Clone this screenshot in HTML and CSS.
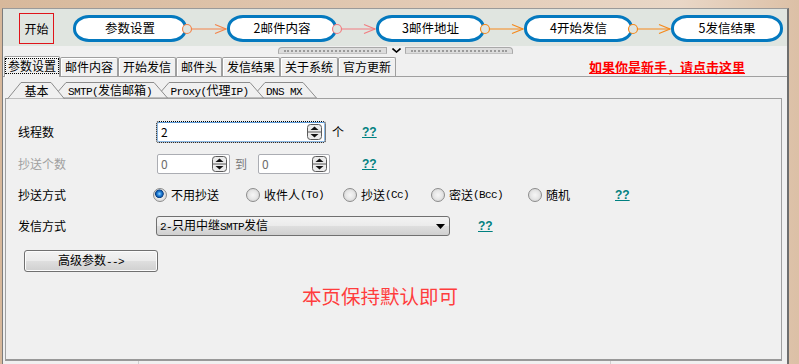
FILE: index.html
```html
<!DOCTYPE html>
<html lang="zh-CN">
<head>
<meta charset="utf-8">
<title>群发设置</title>
<link rel="stylesheet" href="styles.css">
</head>
<body>
<div class="frame">
  <div class="header">
    <div class="start">开始</div>
    <div class="flow">
      <div class="node">参数设置</div>
      <svg class="conn orange" width="40" height="27" viewBox="0 0 40 27"><line x1="4.5" y1="14" x2="39" y2="14"/><polyline points="28,9.5 39,14 28,18.5"/><circle cx="0" cy="14" r="4.5"/></svg>
      <div class="node">2邮件内容</div>
      <svg class="conn pink" width="39" height="27" viewBox="0 0 39 27"><line x1="4.5" y1="14" x2="38" y2="14"/><polyline points="27,9.5 38,14 27,18.5"/><circle cx="0" cy="14" r="4.5"/></svg>
      <div class="node">3邮件地址</div>
      <svg class="conn amber" width="39" height="27" viewBox="0 0 39 27"><line x1="4.5" y1="14" x2="38" y2="14"/><polyline points="27,9.5 38,14 27,18.5"/><circle cx="0" cy="14" r="4.5"/></svg>
      <div class="node">4开始发信</div>
      <svg class="conn amber" width="38" height="27" viewBox="0 0 38 27"><line x1="4.5" y1="14" x2="37" y2="14"/><polyline points="26,9.5 37,14 26,18.5"/><circle cx="0" cy="14" r="4.5"/></svg>
      <div class="node">5发信结果</div>
    </div>
  </div>

  <div class="splitter">
    <div class="grip grip-left"></div>
    <div class="chev"><svg width="9" height="5" viewBox="0 0 9 5"><polyline points="0.5,0.5 4.5,4 8.5,0.5"/></svg></div>
    <div class="grip grip-right"></div>
  </div>

  <div class="tabrow">
    <div class="tabs">
      <div class="tab active"><span class="focus">参数设置</span></div>
      <div class="tab">邮件内容</div>
      <div class="tab">开始发信</div>
      <div class="tab">邮件头</div>
      <div class="tab">发信结果</div>
      <div class="tab">关于系统</div>
      <div class="tab">官方更新</div>
    </div>
    <a class="newbie">如果你是新手，请点击这里</a>
  </div>

  <div class="page">
    <div class="subtabs">
      <div class="stab s1 sel">
        <svg width="58" height="17" viewBox="0 0 58 17"><polygon points="0.5,17 14,0.5 44,0.5 57.5,17"/></svg>
        <span class="stext">基本</span>
      </div>
      <div class="stab s2">
        <svg width="116" height="16" viewBox="0 0 116 16"><polygon points="0.5,16 14,0.5 102,0.5 115.5,16"/></svg>
        <span class="stext"><span class="a">SMTP(</span>发信邮箱<span class="a">)</span></span>
      </div>
      <div class="stab s3">
        <svg width="109" height="16" viewBox="0 0 109 16"><polygon points="0.5,16 14,0.5 95,0.5 108.5,16"/></svg>
        <span class="stext"><span class="a">Proxy(</span>代理<span class="a">IP)</span></span>
      </div>
      <div class="stab s4">
        <svg width="66" height="16" viewBox="0 0 66 16"><polygon points="0.5,16 14,0.5 52,0.5 65.5,16"/></svg>
        <span class="stext"><span class="a">DNS MX</span></span>
      </div>
    </div>

    <div class="panel">
      <div class="row r1">
        <span class="label">线程数</span>
        <div class="spin focus w1">
          <span class="value">2</span>
          <svg class="spinbtn" width="15" height="16" viewBox="0 0 15 16"><rect x="0.5" y="0.5" width="14" height="15" rx="3"/><line x1="1" y1="8" x2="14" y2="8"/><polygon points="3.5,6 7.5,2.5 11.5,6"/><polygon points="3.5,10 7.5,13.5 11.5,10"/></svg>
        </div>
        <span class="unit">个</span>
        <a class="help h1">??</a>
      </div>

      <div class="row r2">
        <span class="label disabled">抄送个数</span>
        <div class="spin w2">
          <span class="value dim">0</span>
          <svg class="spinbtn" width="15" height="16" viewBox="0 0 15 16"><rect x="0.5" y="0.5" width="14" height="15" rx="3"/><line x1="1" y1="8" x2="14" y2="8"/><polygon points="3.5,6 7.5,2.5 11.5,6"/><polygon points="3.5,10 7.5,13.5 11.5,10"/></svg>
        </div>
        <span class="to">到</span>
        <div class="spin w3">
          <span class="value dim">0</span>
          <svg class="spinbtn" width="15" height="16" viewBox="0 0 15 16"><rect x="0.5" y="0.5" width="14" height="15" rx="3"/><line x1="1" y1="8" x2="14" y2="8"/><polygon points="3.5,6 7.5,2.5 11.5,6"/><polygon points="3.5,10 7.5,13.5 11.5,10"/></svg>
        </div>
        <a class="help h2">??</a>
      </div>

      <div class="row r3">
        <span class="label">抄送方式</span>
        <div class="radios">
          <label class="ropt o1"><span class="radio on"></span>不用抄送</label>
          <label class="ropt o2"><span class="radio"></span>收件人<span class="a">(To)</span></label>
          <label class="ropt o3"><span class="radio"></span>抄送<span class="a">(Cc)</span></label>
          <label class="ropt o4"><span class="radio"></span>密送<span class="a">(Bcc)</span></label>
          <label class="ropt o5"><span class="radio"></span>随机</label>
          <a class="help">??</a>
        </div>
      </div>

      <div class="row r4">
        <span class="label">发信方式</span>
        <div class="combo">
          <span class="ctext"><span class="a">2-</span>只用中继<span class="a">SMTP</span>发信</span>
          <svg class="carrow" width="9" height="5" viewBox="0 0 9 5"><polygon points="0,0 9,0 4.5,5"/></svg>
        </div>
        <a class="help h4">??</a>
      </div>

      <div class="row r5">
        <button class="btn" type="button">高级参数<span class="a">--&gt;</span></button>
      </div>

      <div class="note">本页保持默认即可</div>
    </div>
  </div>

  <div class="status">
    <span class="cell c1"></span>
    <span class="cell c2"></span>
    <span class="cell c3"></span>
  </div>
</div>
</body>
</html>
```

FILE: styles.css
```css
html, body {
  margin: 0;
  padding: 0;
}

body {
  width: 799px;
  height: 364px;
  overflow: hidden;
  background: linear-gradient(90deg, #d7b89b 0%, #e3cbb6 55%, #e9d7c7 85%, #dcc0a6 100%);
  font-family: "Noto Sans CJK SC", "Noto Sans", sans-serif;
  font-size: 12px;
  color: #000;
}

.frame {
  margin: 8px 0 0 2px;
  width: 784px;
  height: 356px;
  border-left: 1px solid #7c7c7c;
  border-top: 1px solid #9a9a9a;
  border-right: 2px solid #6e6e6e;
  background: #f0f0f0;
  display: flex;
  flex-direction: column;
}

/* ---------- header flow ---------- */
.header {
  height: 37px;
  flex: none;
  background: #e0e5e0;
  display: flex;
  align-items: flex-start;
}

.start {
  margin: 4px 0 0 16px;
  width: 35px;
  height: 31px;
  box-sizing: border-box;
  border: 1px solid #e0141a;
  display: flex;
  align-items: center;
  justify-content: center;
  font-size: 12px;
  line-height: 1;
}

.flow {
  margin: 6px 0 0 19px;
  height: 27px;
  display: grid;
  grid-template-columns: 114px 40px 110px 39px 109px 39px 109px 38px 112px;
}

.node {
  box-sizing: border-box;
  height: 27px;
  border: 3px solid #0479bf;
  border-radius: 16px / 13px;
  background: #fff;
  display: flex;
  align-items: center;
  justify-content: center;
  font-size: 12.5px;
  line-height: 1;
}

.conn {
  overflow: visible;
  fill: none;
  stroke-width: 1.2;
}
.conn circle { fill: #e0e5e0; }
.conn.orange { stroke: #f3844a; }
.conn.pink { stroke: #f27d80; }
.conn.amber { stroke: #f5891c; }

/* ---------- splitter ---------- */
.splitter {
  height: 10px;
  flex: none;
  display: flex;
  align-items: flex-start;
  padding-left: 275px;
}

.grip {
  margin-top: 1px;
  height: 7px;
  box-sizing: border-box;
  border: 1px solid #a9a9a9;
  border-bottom-color: #c4c4c4;
  background: #dcdcdc;
}
.grip::after {
  content: "";
  display: block;
  margin: 2px 5px 0;
  border-top: 2px dotted #9a9a9a;
}
.grip-left {
  width: 109px;
  border-radius: 4px 0 0 0;
}
.grip-right {
  width: 108px;
  border-radius: 0 4px 0 0;
}
.chev {
  width: 18px;
  height: 8px;
  display: flex;
  justify-content: center;
  padding-top: 2px;
  box-sizing: border-box;
}
.chev svg {
  fill: none;
  stroke: #000;
  stroke-width: 1.6;
}

/* ---------- main tabs ---------- */
.tabrow {
  height: 20px;
  flex: none;
  border-bottom: 1px solid #a0a0a0;
  display: flex;
  align-items: flex-end;
}

.tabs {
  display: flex;
  align-items: flex-end;
  margin-left: 1px;
  height: 20px;
}

.tab {
  height: 19px;
  box-sizing: border-box;
  padding: 0 4px;
  border: 1px solid #9f9f9f;
  border-bottom: none;
  border-radius: 2px 2px 0 0;
  box-shadow: inset 1px 1px 0 #ffffff;
  background: #f0f0f0;
  display: flex;
  align-items: center;
  line-height: 1;
  margin-right: 0;
}

.tab.active {
  height: 21px;
  margin-bottom: -1px;
  padding: 0 1px 2px;
  position: relative;
  z-index: 1;
}

.focus {
  outline: 1px dotted #000;
  outline-offset: 0;
  padding: 1px 2px;
}

.newbie {
  margin-left: auto;
  margin-right: 42px;
  align-self: center;
  color: #ff0000;
  font-weight: bold;
  font-size: 13px;
  line-height: 1;
  text-decoration: underline;
  cursor: pointer;
}

/* ---------- page / sub tabs ---------- */
.page {
  height: 284px;
  flex: none;
  box-sizing: border-box;
  padding: 5px 5px 0 2px;
  display: flex;
  flex-direction: column;
}

.subtabs {
  height: 16px;
  flex: none;
  display: flex;
  padding-left: 2px;
  position: relative;
  z-index: 2;
}

.stab {
  position: relative;
  height: 16px;
  display: flex;
  align-items: center;
  justify-content: center;
  margin-left: -13px;
  line-height: 1;
}
.stab svg {
  position: absolute;
  left: 0;
  top: 0;
  fill: #f0f0f0;
  stroke: #8c8c8c;
  stroke-width: 1;
}
.stab .stext {
  position: relative;
  padding-top: 1px;
}
.s1 { width: 58px; margin-left: 0; z-index: 5; }
.s2 { width: 116px; z-index: 4; }
.s3 { width: 109px; z-index: 3; }
.s4 { width: 66px; z-index: 2; }
.s1 .stext { padding-left: 1px; }

.a {
  font-family: "Liberation Mono", "DejaVu Sans Mono", monospace;
  font-size: 11px;
  letter-spacing: -0.6px;
}

.panel {
  flex: 1;
  border: 1px solid #a0a0a0;
  border-bottom: 2px solid #989898;
  padding: 23px 0 0 12px;
  display: flex;
  flex-direction: column;
}

.row {
  display: flex;
  align-items: center;
  height: 20px;
  line-height: 1;
}
.r2 { margin-top: 12px; }
.r3 { margin-top: 11px; }
.r4 { margin-top: 11px; }
.r5 { margin-top: 14px; height: 22px; }

.label {
  width: 139px;
  flex: none;
}
.label.disabled { color: #a0a0a0; }

.spin {
  height: 20px;
  box-sizing: border-box;
  border: 1px solid #abadb3;
  border-radius: 2px;
  background: #fff;
  display: flex;
  align-items: center;
  padding: 0 2px 0 3px;
}
.spin.focus {
  border-color: #8bb8e4;
  border-top-color: #5d9ad6;
}
.w1 { width: 168px; }
.w2 { width: 73px; }
.w3 { width: 72px; margin-left: 11px; }

.value { flex: 1; }
.value.dim { color: #6d6d6d; }

.spinbtn rect {
  fill: #ececec;
  stroke: #5a5a5a;
}
.spinbtn line { stroke: #5a5a5a; }
.spinbtn polygon { fill: #111; }

.unit { margin-left: 7px; }
.to { margin-left: 5px; color: #7a7a7a; }

.help {
  color: #008080;
  font-family: "Liberation Sans", sans-serif;
  font-weight: bold;
  font-size: 12px;
  text-decoration: underline;
  cursor: pointer;
}
.h1 { margin-left: 18px; }
.h2 { margin-left: 32px; }
.h4 { margin-left: 28px; }

.radios {
  display: flex;
  align-items: center;
  margin-left: -4px;
}
.ropt {
  display: flex;
  align-items: center;
}
.o1 { width: 93px; }
.o2 { width: 97px; }
.o3 { width: 88px; }
.o4 { width: 97px; }
.o5 { width: 87px; }

.radio {
  width: 14px;
  height: 14px;
  box-sizing: border-box;
  border-radius: 50%;
  border: 1px solid #8c8c8c;
  background: radial-gradient(circle at 50% 50%, #f6f6f6 0, #e8e8e8 45%, #cdcdcd 100%);
  margin-right: 4px;
  flex: none;
}
.radio.on {
  background:
    radial-gradient(circle at 45% 40%, #9fd8ff 0, #2d8ce0 1.8px, #1262b8 3px, #0b3f7e 4px, rgba(255,255,255,0) 4.6px),
    radial-gradient(circle at 50% 50%, #f6f6f6 0, #e8e8e8 45%, #cdcdcd 100%);
}

.combo {
  margin-left: -1px;
  width: 294px;
  height: 20px;
  box-sizing: border-box;
  border: 1px solid #707070;
  border-radius: 3px;
  background: linear-gradient(#f3f3f3 0%, #ebebeb 48%, #dedede 52%, #d0d0d0 100%);
  display: flex;
  align-items: center;
  padding: 0 4px 0 3px;
}
.ctext { flex: 1; }
.carrow { fill: #000; }

.btn {
  margin: 0 0 0 6px;
  width: 134px;
  height: 22px;
  box-sizing: border-box;
  border: 1px solid #707070;
  border-radius: 3px;
  background: linear-gradient(#f3f3f3 0%, #ebebeb 48%, #dedede 52%, #d0d0d0 100%);
  box-shadow: inset 0 0 0 1px #fcfcfc;
  font-family: "Noto Sans CJK SC", sans-serif;
  font-size: 12px;
  line-height: 1;
  color: #000;
  padding: 0;
}

.note {
  margin: 13px 0 0 284px;
  color: #ff3d3d;
  font-size: 19.5px;
  line-height: 22px;
}

/* ---------- status bar ---------- */
.status {
  flex: 1;
  display: flex;
}
.cell {
  border-right: 1px solid #cfcfcf;
}
.c1 { width: 135px; }
.c2 { width: 471px; }
.c3 { flex: 1; border-right: none; }
```
